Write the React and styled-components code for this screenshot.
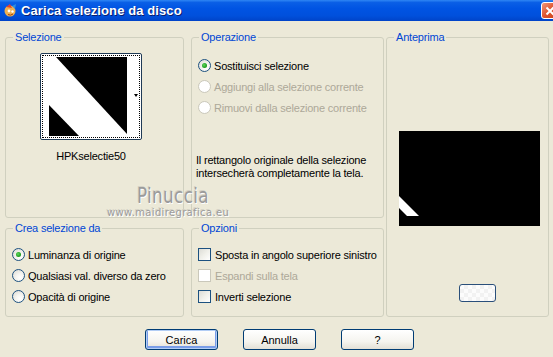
import React from 'react'
import styled, { createGlobalStyle, css } from 'styled-components'

const GlobalStyle = createGlobalStyle`
  html, body {
    margin: 0;
    padding: 0;
    overflow: hidden;
    background: #ece9d8;
  }
  body {
    font-family: "Liberation Sans", Arial, sans-serif;
    font-size: 11px;
    letter-spacing: -0.2px;
    color: #000;
  }
`

const Window = styled.div`
  position: relative;
  width: 553px;
  height: 357px;
  background: #ece9d8;
  overflow: hidden;
`

const TitleBar = styled.div`
  height: 21px;
  display: flex;
  align-items: center;
  padding-left: 3px;
  gap: 3px;
  background: linear-gradient(
    to bottom,
    #2f86f4 0%,
    #0a5fe6 12%,
    #0054e3 40%,
    #0050dc 75%,
    #0043c8 100%
  );
`

const Title = styled.span`
  flex: 1;
  color: #fff;
  font-family: "Liberation Sans", Arial, sans-serif;
  font-weight: bold;
  font-size: 13px;
  letter-spacing: 0.1px;
  text-shadow: 1px 1px 0 #0a1e6e;
`

const CloseBtn = styled.div`
  width: 21px;
  height: 17px;
  margin-right: -9px;
  border: 1px solid #fff;
  border-radius: 3px;
  background: linear-gradient(135deg, #f0987a 0%, #e0552f 45%, #c53a12 100%);
  display: flex;
  align-items: center;
  justify-content: flex-start;
  padding-left: 3px;
  box-sizing: border-box;
`

const Body = styled.div`
  padding: 16px 0 0 5px;
`

const Grid = styled.div`
  display: grid;
  grid-template-columns: 179px 7px 193px 2px 163px;
  grid-template-rows: 181px 89px;
  row-gap: 10px;
  grid-template-areas:
    "sel . op . ant"
    "crea . opz . ant";
`

const Group = styled.div`
  grid-area: ${p => p.$area};
  position: relative;
  box-sizing: border-box;
  border: 1px solid #d0d0bf;
  border-radius: 3px;
  display: flex;
  flex-direction: column;
  padding: ${p => p.$pad || '0'};
  align-items: ${p => p.$align || 'stretch'};
`

const Caption = styled.span`
  position: absolute;
  top: -8px;
  left: 7px;
  padding: 0 2px 0 2px;
  background: #ece9d8;
  color: #0046d5;
  line-height: 14px;
`

const Thumb = styled.div`
  margin-top: 15px;
  width: 102px;
  box-sizing: border-box;
  border: 1px solid #1f3a55;
  border-radius: 2px;
  padding: 1px;
  background: #fff;
`

const Focus = styled.div`
  display: flex;
  border: 1px dotted #000;
  padding: 1px 1px 1px 6px;
  background: #fff;
`

const ArrowSlot = styled.div`
  flex: 1;
  display: flex;
  align-items: center;
  justify-content: flex-end;
`

const Arrow = styled.span`
  width: 0;
  height: 0;
  margin-top: -2px;
  border-left: 2px solid transparent;
  border-right: 2px solid transparent;
  border-top: 3px solid #000;
`

const ThumbName = styled.div`
  margin-top: 10px;
  line-height: 13px;
`

const Row = styled.label`
  display: flex;
  align-items: center;
  height: 21px;
  gap: ${p => p.$gap || 3}px;
  color: ${p => (p.$disabled ? '#aca899' : '#000')};
  white-space: nowrap;
`

const Radio = styled.span`
  position: relative;
  width: 13px;
  height: 13px;
  box-sizing: border-box;
  border-radius: 50%;
  border: 1px solid ${p => (p.$disabled ? '#cac8bb' : '#1c5180')};
  background: ${p =>
    p.$disabled
      ? '#fff'
      : 'radial-gradient(circle at 65% 70%, #fff 0%, #f4f4f0 40%, #d8d6ce 100%)'};
  flex: none;
  ${p =>
    p.$checked &&
    css`
      &::after {
        content: '';
        position: absolute;
        left: 3px;
        top: 3px;
        width: 5px;
        height: 5px;
        border-radius: 50%;
        background: radial-gradient(circle at 40% 40%, #5fd65f 0%, #21a121 60%, #177917 100%);
      }
    `}
`

const Check = styled.span`
  width: 13px;
  height: 13px;
  box-sizing: border-box;
  border: 1px solid ${p => (p.$disabled ? '#cac8bb' : '#1c5180')};
  background: ${p =>
    p.$disabled ? '#fff' : 'linear-gradient(135deg, #dcdcd6 0%, #f0f0ea 50%, #fff 100%)'};
  flex: none;
`

const Note = styled.p`
  margin: 36px 0 0 -2px;
  line-height: 13px;
`

const Preview = styled.div`
  margin: 93px 0 0 12px;
  width: 141px;
  height: 95px;
  background: #000;
`

const SmallBtn = styled.div`
  margin: 58px 0 0 72px;
  width: 37px;
  height: 18px;
  box-sizing: border-box;
  border: 1px solid #2a4f7a;
  border-radius: 3px;
  background:
    conic-gradient(#f2f2f2 25%, #fcfcfc 0 50%, #f2f2f2 0 75%, #fcfcfc 0) 0 0 / 8px 8px;
`

const ButtonBar = styled.div`
  display: flex;
  gap: 25px;
  padding: 12px 0 0 140px;
`

const Button = styled.button`
  width: 73px;
  height: 21px;
  box-sizing: border-box;
  border: 1px solid #003c74;
  border-radius: 3px;
  font-family: "Liberation Sans", Arial, sans-serif;
  font-size: 11px;
  color: #000;
  padding: 0;
  background: linear-gradient(to bottom, #ffffff 0%, #f5f4ef 60%, #e3e0d6 100%);
  ${p =>
    p.$default &&
    css`
      box-shadow: inset 0 0 0 1px #b2cdf5, inset 0 -1px 0 2px #7a9de8;
    `}
`

const Watermark = styled.div`
  position: absolute;
  left: ${p => p.$x}px;
  top: ${p => p.$y}px;
  font-family: "DejaVu Sans", Verdana, sans-serif;
  font-size: ${p => p.$size}px;
  color: #9b9b9b;
  letter-spacing: ${p => p.$spacing || 0}px;
  transform: scaleX(${p => p.$squeeze || 1});
  transform-origin: left top;
  text-shadow: 1px 1px 0 #fff, -1px -1px 0 #d4d2c6;
  white-space: nowrap;
  pointer-events: none;
`

const AppIcon = () => (
  <svg width="15" height="15" viewBox="0 0 15 15">
    <circle cx="7" cy="8" r="5.5" fill="#f0b050" />
    <path d="M3 4 L7 1 L9 5 Z" fill="#e04030" />
    <path d="M9 3 L13 1 L12 6 Z" fill="#3090e0" />
    <circle cx="6" cy="8" r="1.4" fill="#fff" />
    <circle cx="9.5" cy="8.5" r="1.2" fill="#fff" />
    <path d="M5 11.5 Q7.5 13 10 11" stroke="#a04010" strokeWidth="1" fill="none" />
  </svg>
)

const CloseX = () => (
  <svg width="10" height="10" viewBox="0 0 10 10">
    <path d="M1.5 1.5 L8.5 8.5 M8.5 1.5 L1.5 8.5" stroke="#fff" strokeWidth="2" />
  </svg>
)

const SelectionImage = () => (
  <svg width="78" height="79" viewBox="0 0 78 79" style={{ display: 'block' }}>
    <rect width="78" height="79" fill="#000" />
    <polygon points="0,0 7,0 78,77 78,79 30,79 0,48" fill="#fff" />
  </svg>
)

const PreviewImage = () => (
  <svg width="141" height="95" viewBox="0 0 141 95" style={{ display: 'block' }}>
    <rect width="141" height="95" fill="#000" />
    <polygon points="0,65 20,85 8,85 0,77" fill="#fff" />
  </svg>
)

export default function App() {
  return (
    <Window>
      <GlobalStyle />
      <TitleBar>
        <AppIcon />
        <Title>Carica selezione da disco</Title>
        <CloseBtn>
          <CloseX />
        </CloseBtn>
      </TitleBar>

      <Body>
        <Grid>
          <Group $area="sel" $align="center" $pad="0 7px 0 0">
            <Caption>Selezione</Caption>
            <Thumb>
              <Focus>
                <SelectionImage />
                <ArrowSlot>
                  <Arrow />
                </ArrowSlot>
              </Focus>
            </Thumb>
            <ThumbName>HPKselectie50</ThumbName>
          </Group>

          <Group $area="op" $pad="17px 0 0 6px">
            <Caption>Operazione</Caption>
            <Row>
              <Radio $checked />
              Sostituisci selezione
            </Row>
            <Row $disabled>
              <Radio $disabled />
              Aggiungi alla selezione corrente
            </Row>
            <Row $disabled>
              <Radio $disabled />
              Rimuovi dalla selezione corrente
            </Row>
            <Note>
              Il rettangolo originale della selezione
              <br />
              intersecherà completamente la tela.
            </Note>
          </Group>

          <Group $area="ant">
            <Caption>Anteprima</Caption>
            <Preview>
              <PreviewImage />
            </Preview>
            <SmallBtn />
          </Group>

          <Group $area="crea" $pad="15px 0 0 6px">
            <Caption>Crea selezione da</Caption>
            <Row>
              <Radio $checked />
              Luminanza di origine
            </Row>
            <Row>
              <Radio />
              Qualsiasi val. diverso da zero
            </Row>
            <Row>
              <Radio />
              Opacità di origine
            </Row>
          </Group>

          <Group $area="opz" $pad="15px 0 0 6px">
            <Caption>Opzioni</Caption>
            <Row $gap={4}>
              <Check />
              Sposta in angolo superiore sinistro
            </Row>
            <Row $gap={4} $disabled>
              <Check $disabled />
              Espandi sulla tela
            </Row>
            <Row $gap={4}>
              <Check />
              Inverti selezione
            </Row>
          </Group>
        </Grid>

        <ButtonBar>
          <Button $default>Carica</Button>
          <Button>Annulla</Button>
          <Button>?</Button>
        </ButtonBar>
      </Body>

      <Watermark $x={137} $y={183} $size={22} $spacing={0.5} $squeeze={0.76}>
        Pinuccia
      </Watermark>
      <Watermark $x={107} $y={207} $size={10} $spacing={0.35}>
        www.maidiregrafica.eu
      </Watermark>
    </Window>
  )
}
